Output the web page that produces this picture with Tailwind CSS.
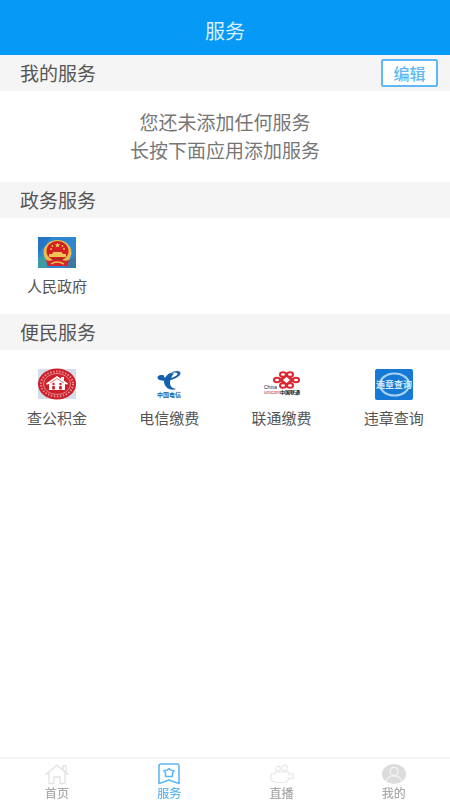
<!DOCTYPE html>
<html lang="zh-CN">
<head>
  <meta charset="UTF-8" />
  <meta name="viewport" content="width=device-width, initial-scale=1.0"/>
  <title>服务</title>
  <script src="https://cdn.jsdelivr.net/npm/@tailwindcss/browser@4"></script>
</head>
<body class="min-h-screen flex flex-col bg-white text-[#555] font-['Noto_Sans_CJK_SC',sans-serif]">

  <header class="bg-[#0699f5] h-[55px] pt-1.5 flex items-center justify-center">
    <h1 class="text-[20px] leading-6 text-[#d8effd]">服务</h1>
  </header>

  <main class="flex-1">
    <!-- My services -->
    <section>
      <div class="bg-[#f5f5f5] h-9 pl-5 pr-3 flex items-center justify-between">
        <h2 class="text-[19px] leading-6">我的服务</h2>
        <button type="button" class="w-[57px] h-7 rounded-xs border-2 border-[#5fb8f3] bg-white text-base leading-5 font-medium text-[#5fb8f3]">编辑</button>
      </div>
      <div class="pt-[17px] pb-[18px] text-center text-[19px] leading-7 text-[#777]">
        <p>您还未添加任何服务</p>
        <p>长按下面应用添加服务</p>
      </div>
    </section>

    <!-- Government services -->
    <section>
      <div class="bg-[#f5f5f5] h-9 pl-5 flex items-center">
        <h2 class="text-[19px] leading-6">政务服务</h2>
      </div>
      <div class="grid grid-cols-4 pt-[18px] pb-[18px] pl-px text-[15px] leading-5">
        <a href="#gov" class="flex flex-col items-center gap-2">
          <svg class="w-[38px] h-8" viewBox="0 0 38 32">
            <rect y="1" width="38" height="31" fill="#2e86cf"/>
            <path d="M0 1h13L0 18z" fill="#2374c4"/>
            <path d="M0 22l9-4v14H0z" fill="#3a9aa5"/>
            <path d="M30 25l8-5v12H28z" fill="#3e78a0"/>
            <path d="M8 21h23l-2 9H10z" fill="#d3242b"/>
            <ellipse cx="19.500" cy="16.500" rx="14" ry="12.500" fill="#e9bd4c"/>
            <ellipse cx="19.500" cy="15" rx="11" ry="10" fill="#d21f22"/>
            <path d="M19.500 6.500l.8 1.700h2l-1.600 1.200.6 2-1.800-1.200-1.800 1.200.6-2-1.600-1.200h2z" fill="#f5d25a"/>
            <g fill="#efc554">
              <circle cx="14.500" cy="10" r=".9"/><circle cx="24.500" cy="10" r=".9"/>
              <circle cx="13" cy="13" r=".9"/><circle cx="26" cy="13" r=".9"/>
              <path d="M15.500 16h8l1.500 2h3v3H11v-3h3z"/>
            </g>
            <path d="M8 24q5 2 8-1h7q3 3 8 1l-2 6H10z" fill="#d3242b"/>
            <path d="M14 23h11" fill="none" stroke="#8f2a20" stroke-width="1"/>
            <path d="M13 28q6-4 13 0" fill="none" stroke="#e9bd4c" stroke-width="1.500"/>
          </svg>
          <span>人民政府</span>
        </a>
      </div>
    </section>

    <!-- Public services -->
    <section>
      <div class="bg-[#f5f5f5] h-9 pl-5 flex items-center">
        <h2 class="text-[19px] leading-6">便民服务</h2>
      </div>
      <div class="grid grid-cols-4 pt-[18px] pb-[18px] pl-px text-[15px] leading-5">
        <a href="#fund" class="flex flex-col items-center gap-2">
          <svg class="w-[38px] h-8" viewBox="0 0 38 32">
            <rect y="1" width="38" height="30" fill="#d5dcea"/>
            <ellipse cx="19" cy="16" rx="19" ry="15.500" fill="#cc1f29"/>
            <ellipse cx="19" cy="16" rx="16" ry="12.500" fill="none" stroke="#e58f94" stroke-width="2" stroke-dasharray="1.500 1.500"/>
            <ellipse cx="19" cy="16" rx="13.500" ry="10.500" fill="#cc1f29" stroke="#e9a5a9" stroke-width=".8"/>
            <path d="M8 15.500L19 8l4 2.700V9h3v3.800l4 2.700-1 1.300-2-1V22H11v-6.200l-2 1z" fill="#fff"/>
            <path d="M12 15L19 10.500l7 4.500" fill="none" stroke="#cc1f29" stroke-width=".6"/>
            <g fill="#cc1f29">
              <circle cx="15.500" cy="16" r="1.200"/><circle cx="22.500" cy="16" r="1.200"/>
              <path d="M14 18.500l1.500-.7 1.500.7-.3 3h-2.400zM21 18.500l1.500-.7 1.500.7-.3 3h-2.400z"/>
            </g>
          </svg>
          <span>查公积金</span>
        </a>
        <a href="#telecom" class="flex flex-col items-center gap-2">
          <svg class="w-[38px] h-8" viewBox="0 0 38 32">
            <g fill="#1560ad">
              <path d="M14 7.500C10 6.500 7.500 7.500 7.500 9.500c0 3 6 4 12 2.800 6-1.200 11-4.300 11-7C30.500 3 27 2.500 23 3.800l-3 1.400c4-1 7.500-1 7.500.6 0 2-4.500 4-8.500 4.500-3.500.4-5.500-.8-5-2.800z"/>
              <path d="M20 5c-4.500 2.500-7 7-5.500 11 1.500 4.500 6.500 7 12 5-4.500-.5-6.700-3-6.500-6.500.1-3.500 1.500-6.500 4-9z"/>
            </g>
            <text x="19" y="29" text-anchor="middle" font-size="6" font-weight="700" fill="#1f62aa">中国电信</text>
          </svg>
          <span>电信缴费</span>
        </a>
        <a href="#unicom" class="flex flex-col items-center gap-2">
          <svg class="w-[38px] h-8" viewBox="0 0 38 32">
            <g fill="none" stroke="#dc2733" stroke-width="2">
              <ellipse cx="20" cy="6.500" rx="3" ry="2.300"/><ellipse cx="27" cy="6.500" rx="3" ry="2.300"/>
              <ellipse cx="14" cy="12" rx="3" ry="2.300"/><ellipse cx="33" cy="12" rx="3" ry="2.300"/>
              <ellipse cx="20" cy="17.500" rx="3" ry="2.300"/><ellipse cx="27" cy="17.500" rx="3" ry="2.300"/>
              <path d="M23.500 7.500l5 4.500-5 4.500-5-4.500zM16.500 12l4-3M16.500 12l4 3M30.500 12l-4-3M30.500 12l-4 3"/>
            </g>
            <text x="1" y="21" font-family="Liberation Sans, sans-serif" font-size="5" fill="#222">China</text>
            <text x="1" y="26" font-family="Liberation Sans, sans-serif" font-size="5" fill="#b8323b">unicom</text>
            <text x="17" y="26" font-size="5" font-weight="700" fill="#111">中国联通</text>
          </svg>
          <span>联通缴费</span>
        </a>
        <a href="#traffic" class="flex flex-col items-center gap-2">
          <svg class="w-[38px] h-8" viewBox="0 0 38 32">
            <rect y="1" width="38" height="31" rx="2" fill="#1679d6"/>
            <ellipse cx="19.500" cy="16.500" rx="14.500" ry="11" fill="none" stroke="#a9d2f5" stroke-width="2.200"/>
            <rect x="7" y="12.500" width="25" height="8" fill="#1679d6"/>
            <text x="19" y="20" text-anchor="middle" font-size="9" font-weight="700" fill="#d5eafc">违章查询</text>
          </svg>
          <span>违章查询</span>
        </a>
      </div>
    </section>
  </main>

  <nav class="sticky bottom-0 bg-white border-t-2 border-[#f5f5f5] h-[43px] grid grid-cols-4 pt-1 pl-px text-xs leading-4 font-medium text-[#aaa]">
    <a href="#home" class="flex flex-col items-center">
      <svg class="w-6 h-[22px]" viewBox="0 0 24 22" fill="none" stroke="#e2e2e2" stroke-width="1.300" stroke-linejoin="round" stroke-linecap="round">
        <path d="M1 11.500L12 2l11 9.500M18 7V3h3v6.500M4 10v10.500h5V14h6v6.500h5V10"/>
      </svg>
      <span>首页</span>
    </a>
    <a href="#service" aria-current="page" class="flex flex-col items-center text-[#5fb8f3]">
      <svg class="w-6 h-[22px]" viewBox="0 0 24 22" fill="none" stroke="#5fb8f3" stroke-width="1.600" stroke-linejoin="round">
        <path d="M4 1h16q2 0 2 2v17.500l-4.500-1.500L12 17l-5.500 2L2 20.500V3q0-2 2-2z"/>
        <path d="M12 5.500l2 1.700 3 .6-1.500 2.400v3.300H8.500v-3.300L7 7.800l3-.6z"/>
      </svg>
      <span>服务</span>
    </a>
    <a href="#live" class="flex flex-col items-center">
      <svg class="w-6 h-[22px]" viewBox="0 0 24 22" fill="none" stroke="#e8e8e8" stroke-width="1.200" stroke-linejoin="round">
        <path d="M5 9h14v3l4-2v6l-4-1q-1 4-5 4.500H7Q1 19 1 15v-4h4z"/>
        <circle cx="8" cy="5.500" r="2.300"/><circle cx="14.500" cy="5" r="2.800"/>
      </svg>
      <span>直播</span>
    </a>
    <a href="#me" class="flex flex-col items-center">
      <svg class="w-6 h-[22px]" viewBox="0 0 24 22">
        <ellipse cx="12" cy="11" rx="12" ry="10" fill="#dcdcdc"/>
        <g fill="#dcdcdc" stroke="#f4f4f4" stroke-width="1.200">
          <path d="M4.500 18q1-5 7.500-5t7.500 5"/>
          <ellipse cx="12" cy="8.500" rx="4" ry="4.200"/>
        </g>
      </svg>
      <span>我的</span>
    </a>
  </nav>

</body>
</html>
